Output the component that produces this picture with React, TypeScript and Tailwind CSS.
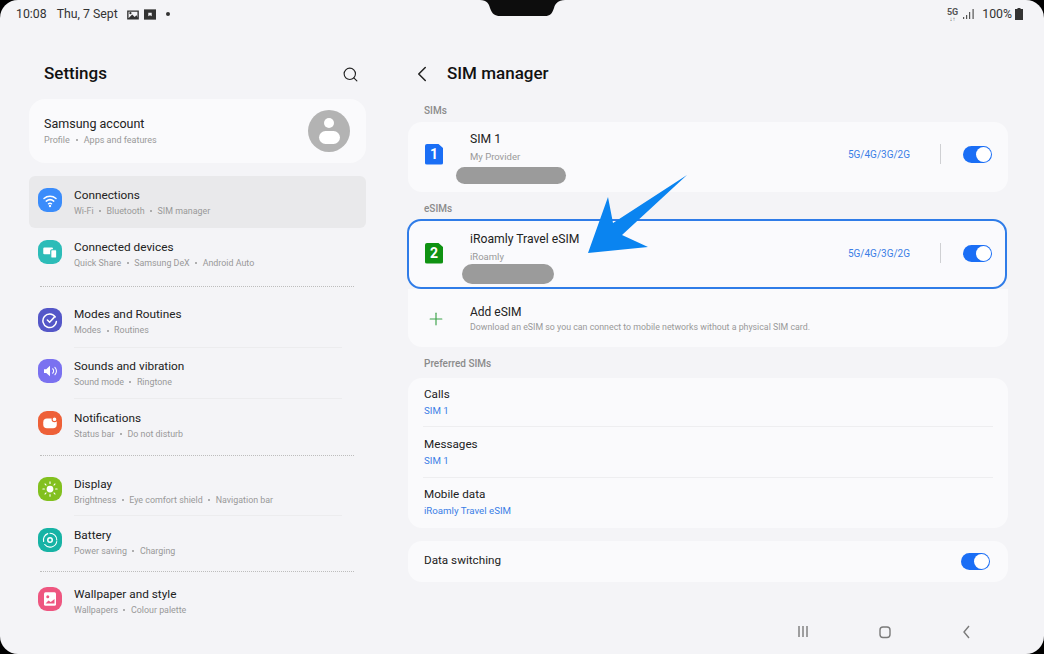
import { ChevronLeft, Plus, Search } from "lucide-react";
import type { ReactNode } from "react";

const font = { fontFamily: "Roboto, sans-serif" };

function Squircle({ bg, children }: { bg: string; children: ReactNode }) {
  return (
    <div className={`flex h-[24px] w-[24px] shrink-0 items-center justify-center rounded-[9px] ${bg}`}>
      <svg viewBox="0 0 24 24" className="h-[18px] w-[18px]" fill="none" stroke="white" strokeWidth="2" strokeLinecap="round">
        {children}
      </svg>
    </div>
  );
}

function Row({ icon, title, sub, active, height = "h-[52px]" }: { icon: ReactNode; title: string; sub: string[]; active?: boolean; height?: string }) {
  return (
    <div className={`flex items-center rounded-[6px] pl-[9px] ${height} ${active ? "bg-[#e9e9eb]" : ""}`}>
      <div className="mb-[4px]">{icon}</div>
      <div className="ml-[12px]">
        <div className="text-[11.8px] leading-[17px] text-[#222]">{title}</div>
        <div className="mt-[1px] flex items-center text-[8.9px] leading-[13px] text-[#999]">
          {sub.map((s, i) => (
            <span key={s} className="flex items-center">
              {i > 0 && <span className="mx-[5.5px] h-[2px] w-[2px] rounded-full bg-[#999]" />}
              {s}
            </span>
          ))}
        </div>
      </div>
    </div>
  );
}

function Toggle() {
  return (
    <div className="flex h-[17px] w-[29px] items-center justify-end rounded-full bg-[#1a6ef5] pr-[1px]">
      <div className="h-[15px] w-[15px] rounded-full bg-white" />
    </div>
  );
}

function SimCard({ n, bg }: { n: string; bg: string }) {
  return (
    <div className={`flex h-[21px] w-[18px] items-center justify-center rounded-[2px] text-[14px] font-bold text-white ${bg}`} style={{ clipPath: "polygon(0 0, 72% 0, 100% 22%, 100% 100%, 0 100%)" }}>
      {n}
    </div>
  );
}

function SimRow({ n, bg, title, sub, pill, selected }: { n: string; bg: string; title: string; sub: string; pill: string; selected?: boolean }) {
  const lift = selected ? "mb-[2px]" : "mb-[6px]";
  return (
    <div className={`flex h-[70px] items-center rounded-[14px] ${selected ? "ml-[-1px] mr-[1px] border-2 border-[#2f7ce8] bg-[#fafafd]" : "bg-[#fafafc]"}`}>
      <div className={`w-[45px] shrink-0 ${lift} ${selected ? "ml-[16px]" : "ml-[17px]"}`}>
        <SimCard n={n} bg={bg} />
      </div>
      <div className={`flex-1 self-start ${selected ? "pt-[10px]" : "pt-[9px]"}`}>
        <div className="text-[12.2px] leading-[17px] text-[#222]">{title}</div>
        <div className="mt-[2px] text-[9.5px] leading-[13px] text-[#999]">{sub}</div>
        <div className={`rounded-full bg-[#9b9b9b] ${pill}`} />
      </div>
      <div className={`text-[10px] text-[#3a7ee6] ${lift}`}>5G/4G/3G/2G</div>
      <div className={`ml-[30px] mr-[22px] h-[20px] w-px bg-[#cfd0d3] ${lift}`} />
      <div className={`${lift} ${selected ? "mr-[13px]" : "mr-[16px]"}`}>
        <Toggle />
      </div>
    </div>
  );
}

function SectionLabel({ children }: { children: ReactNode }) {
  return <div className="h-[12px] pl-[16px] pt-[1px] text-[10px] font-medium leading-[12px] text-[#8b8b8b]">{children}</div>;
}

function Divider({ margin }: { margin: string }) {
  return <div className={`ml-[11px] mr-[12px] border-t border-dotted border-[#bdbdbd] ${margin}`} />;
}

function Thin() {
  return <div className="ml-[45px] mr-[24px] border-t border-[#ececee]" />;
}

function Pref({ title, value, size }: { title: string; value: string; size: string }) {
  return (
    <div className={`pl-[16px] ${size}`}>
      <div className="text-[11.7px] leading-[17px] text-[#222]">{title}</div>
      <div className="mt-[1px] text-[9.7px] leading-[13px] text-[#3a7ee6]">{value}</div>
    </div>
  );
}

export default function App() {
  return (
    <div style={font} className="relative h-[654px] w-[1044px] overflow-hidden bg-black">
      <div className="flex h-full w-full flex-col rounded-[18px] bg-[#f4f4f7]">
        {/* status bar */}
        <div className="flex h-[28px] items-center justify-between pl-[16px] pr-[21px] text-[12.3px] text-[#333]">
          <div className="flex items-center">
            <span>10:08</span>
            <span className="ml-[10px]">Thu, 7 Sept</span>
            <svg viewBox="0 0 14 12" className="ml-[9px] h-[11px] w-[12px]" fill="#333"><path d="M1 2h12v9H1z" fill="none" stroke="#333" strokeWidth="1.6" /><path d="M2 10l4-4 3 3 2-2 2 3z" /><circle cx="4" cy="4.5" r="1.3" /></svg>
            <svg viewBox="0 0 14 12" className="ml-[5px] h-[11px] w-[12px]" fill="#333"><path d="M0 0h14v12H0z" /><path d="M5 4h4v4l-2-1-2 1z" fill="#f4f4f7" /></svg>
            <span className="ml-[10px] h-[4px] w-[4px] rounded-full bg-[#333]" />
          </div>
          <div className="flex items-center">
            <div className="text-center text-[9px] font-bold leading-[8px] text-[#555]">5G<div className="text-[6px] leading-[5px]">↓↑</div></div>
            <svg viewBox="0 0 12 10" className="ml-[5px] h-[10px] w-[12px]" fill="#555"><rect x="0" y="8" width="1.2" height="2" /><rect x="3" y="6" width="1.2" height="4" /><rect x="6" y="3" width="1.2" height="7" /><rect x="9.5" y="0" width="1.2" height="10" /></svg>
            <span className="ml-[7px]">100%</span>
            <svg viewBox="0 0 8 12" className="ml-[3px] h-[12px] w-[8px]" fill="#333"><path d="M2.5 0h3v1H8v11H0V1h2.5z" /></svg>
          </div>
        </div>

        <div className="flex flex-1 pl-[29px]">
          {/* left pane */}
          <div className="w-[337px]">
            <div className="flex h-[71px] items-center justify-between pl-[15px] pr-[7px] pt-[21px]">
              <div className="text-[17px] font-medium text-[#111]">Settings</div>
              <Search size={17} strokeWidth={1.6} className="text-[#222]" />
            </div>
            <div className="flex h-[64px] items-center justify-between rounded-[16px] bg-[#fafafc] pl-[15px] pr-[16px]">
              <div className="pb-[2px]">
                <div className="text-[12.5px] leading-[18px] text-[#222]">Samsung account</div>
                <div className="mt-[1px] flex items-center text-[9px] leading-[12px] text-[#999]">Profile<span className="mx-[6px] h-[2px] w-[2px] rounded-full bg-[#999]" />Apps and features</div>
              </div>
              <div className="relative h-[42px] w-[42px] overflow-hidden rounded-full bg-[#b3b3b3]">
                <div className="absolute left-[16px] top-[8px] h-[10px] w-[10px] rounded-full bg-white" />
                <div className="absolute left-[11px] top-[21px] h-[13px] w-[21px] rounded-full bg-white" />
              </div>
            </div>
            <div className="mt-[13px]">
              <Row active title="Connections" sub={["Wi-Fi", "Bluetooth", "SIM manager"]} icon={<Squircle bg="bg-[#3a8cfb]"><path d="M4 10a12 12 0 0 1 16 0M7 13.5a8 8 0 0 1 10 0M10 17a3.5 3.5 0 0 1 4 0" /><circle cx="12" cy="20" r=".6" /></Squircle>} />
              <Row title="Connected devices" sub={["Quick Share", "Samsung DeX", "Android Auto"]} icon={<Squircle bg="bg-[#2cbcb8]"><rect x="3" y="6" width="13" height="9" rx="1.5" fill="white" stroke="none" /><rect x="13" y="9" width="8" height="11" rx="1.5" fill="white" stroke="#2cbcb8" strokeWidth="1.5" /></Squircle>} />
              <Divider margin="mt-[6px] mb-[9px]" />
              <Row height="h-[51px]" title="Modes and Routines" sub={["Modes", "Routines"]} icon={<Squircle bg="bg-[#5457c8]"><path d="M19 8a9 9 0 1 0 1.5 6" /><path d="M8.5 12l3 3 6-6.5" /></Squircle>} />
              <Thin />
              <Row height="h-[50px]" title="Sounds and vibration" sub={["Sound mode", "Ringtone"]} icon={<Squircle bg="bg-[#7a71f0]"><path d="M4 9.5h3L12 5v14l-5-4.5H4z" fill="white" stroke="none" /><path d="M15.5 9a4 4 0 0 1 0 6M18.5 7a7 7 0 0 1 0 10" strokeWidth="1.4" /></Squircle>} />
              <Thin />
              <Row title="Notifications" sub={["Status bar", "Do not disturb"]} icon={<Squircle bg="bg-[#ee6038]"><rect x="3" y="6" width="18" height="13" rx="5" fill="white" stroke="none" /><circle cx="18" cy="7" r="3.2" fill="white" stroke="#ee6038" strokeWidth="1.5" /></Squircle>} />
              <Divider margin="mt-[4px] mb-[11px]" />
              <Row height="h-[48px]" title="Display" sub={["Brightness", "Eye comfort shield", "Navigation bar"]} icon={<Squircle bg="bg-[#82c01f]"><circle cx="12" cy="12" r="4.5" fill="white" stroke="none" /><path d="M12 2.5v2M12 19.5v2M2.5 12h2M19.5 12h2M5.3 5.3l1.4 1.4M17.3 17.3l1.4 1.4M5.3 18.7l1.4-1.4M17.3 6.7l1.4-1.4" strokeWidth="1.5" /></Squircle>} />
              <Thin />
              <Row title="Battery" sub={["Power saving", "Charging"]} icon={<Squircle bg="bg-[#17b3a5]"><path d="M12 3a9 9 0 0 1 9 9M21 14a9 9 0 0 1-16 4M3.5 14A9 9 0 0 1 9 3.5" strokeWidth="1.5" /><circle cx="12" cy="12" r="3" /></Squircle>} />
              <Divider margin="mt-[3px] mb-[3px]" />
              <Row title="Wallpaper and style" sub={["Wallpapers", "Colour palette"]} icon={<Squircle bg="bg-[#ee5680]"><rect x="4" y="3" width="16" height="18" rx="2" fill="white" stroke="none" /><circle cx="9" cy="9" r="2" fill="#ee5680" stroke="none" /><path d="M6 18l4-4 3 2 5-4v6z" fill="#ee5680" stroke="none" /></Squircle>} />
            </div>
          </div>

          {/* right pane */}
          <div className="ml-[42px] w-[600px]">
            <div className="flex h-[71px] items-center pt-[21px]">
              <ChevronLeft size={26} strokeWidth={1.4} className="ml-[1px] text-[#222]" />
              <div className="ml-[12px] text-[17px] font-medium text-[#111]">SIM manager</div>
            </div>
            <div className="mt-[5px]"><SectionLabel>SIMs</SectionLabel></div>
            <div className="mt-[6px]"><SimRow n="1" bg="bg-[#1a6ef5]" title="SIM 1" sub="My Provider" pill="ml-[-14px] mt-[4px] h-[17px] w-[110px]" /></div>
            <div className="mt-[10px]"><SectionLabel>eSIMs</SectionLabel></div>
            <div className="mt-[5px]"><SimRow selected n="2" bg="bg-[#0f9212]" title="iRoamly Travel eSIM" sub="iRoamly" pill="ml-[-8px] mt-[1px] h-[20px] w-[92px]" /></div>
            <div className="flex h-[58px] items-center rounded-b-[14px] bg-[#fafafc] pt-[2px]">
              <Plus size={20} strokeWidth={1.4} className="ml-[18px] text-[#3da34a]" />
              <div className="ml-[24px]">
                <div className="text-[12px] leading-[17px] text-[#222]">Add eSIM</div>
                <div className="text-[8.8px] leading-[13px] text-[#999]">Download an eSIM so you can connect to mobile networks without a physical SIM card.</div>
              </div>
            </div>
            <div className="mt-[10px]"><SectionLabel>Preferred SIMs</SectionLabel></div>
            <div className="mt-[9px] h-[150px] rounded-[14px] bg-[#fafafc]">
              <Pref size="h-[48px] pt-[8px]" title="Calls" value="SIM 1" />
              <div className="mx-[15px] border-t border-[#eeeef0]" />
              <Pref size="h-[50px] pt-[9px]" title="Messages" value="SIM 1" />
              <div className="mx-[15px] border-t border-[#eeeef0]" />
              <Pref size="h-[50px] pt-[8px]" title="Mobile data" value="iRoamly Travel eSIM" />
            </div>
            <div className="mt-[13px] flex h-[41px] items-center justify-between rounded-[14px] bg-[#fafafc] pl-[16px] pr-[18px]">
              <div className="pb-[2px] text-[11.7px] text-[#222]">Data switching</div>
              <Toggle />
            </div>
            <div className="mt-[42px] flex justify-end pr-[27px]">
              <svg viewBox="0 0 190 16" className="h-[16px] w-[190px]" fill="none" stroke="#7a7a7a" strokeWidth="1.4"><path d="M8 2v11M12 2v11M16 2v11" /><rect x="89" y="3" width="10" height="10.5" rx="3" /><path d="M178 2l-5 6 5 6" /></svg>
            </div>
          </div>
        </div>
      </div>

      {/* notch */}
      <svg viewBox="0 0 1044 654" className="pointer-events-none absolute inset-0 h-full w-full">
        <path d="M480 0C487 0 489 4 490 8C492 14 495 16 500 16L545 16C550 16 552 14 554 8C555 4 558 0 565 0Z" fill="#0d0d0d" />
        {/* arrow */}
        <path d="M687 175L613 223L608 197L588 253L648 247L622 235Z" fill="#0a84f0" />
      </svg>
    </div>
  );
}
